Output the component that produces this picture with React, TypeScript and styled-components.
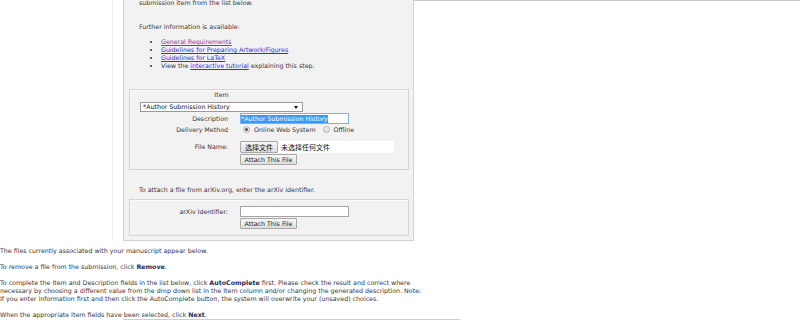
import React from 'react';
import styled, { createGlobalStyle } from 'styled-components';

const GlobalStyle = createGlobalStyle`
  html, body {
    margin: 0;
    padding: 0;
    background: #fff;
  }
  body {
    font-family: 'DejaVu Sans', Verdana, 'Noto Sans CJK SC', sans-serif;
    font-size: 6.3px;
    line-height: 8px;
    color: #333344;
  }
`;

const Page = styled.div`
  width: 800px;
  height: 320px;
  overflow: hidden;
`;

const Top = styled.div`
  display: flex;
  align-items: stretch;
  padding-bottom: 6px;
`;

const Gutter = styled.div`
  width: 112px;
  margin-right: 10px;
  border-right: 1px solid #ededed;
`;

const Panel = styled.div`
  width: 291px;
  box-sizing: border-box;
  background: #f2f2f2;
  border: 1px solid #d2d2d2;
  border-top: none;
  padding: 0 4px 4px 5px;
`;

const Filler = styled.div`
  flex: 1;
  border-top: 1px solid #cacaca;
`;

const Text = styled.p<{ $mt?: number; $mb?: number }>`
  margin: ${p => p.$mt ?? 0}px 0 ${p => p.$mb ?? 0}px 0;
  padding-left: 10px;
`;

const LinkList = styled.ul`
  margin: 0 0 19px 0;
  padding-left: 32px;
  list-style: disc;
`;

const Link = styled.a<{ $visited?: boolean }>`
  color: ${p => (p.$visited ? '#7b3f9e' : '#2f2fe0')};
  text-decoration: underline;
`;

const Fieldset = styled.div<{ $pt: number; $pb: number }>`
  border: 1px solid #d4d4d4;
  box-shadow: inset 1px 1px 0 #fafafa;
  padding: ${p => p.$pt}px 0 ${p => p.$pb}px 0;
`;

const ItemBlock = styled.div`
  margin-left: 10px;
  width: 163px;
`;

const ItemHead = styled.div`
  text-align: center;
  margin-bottom: 3px;
`;

const Select = styled.div`
  height: 10px;
  box-sizing: border-box;
  background: #fff;
  border: 1px solid #9a9a9a;
  display: flex;
  align-items: center;
  justify-content: space-between;
  padding: 0 4px 0 2px;
  color: #111;
`;

const Row = styled.div<{ $mt?: number }>`
  display: grid;
  grid-template-columns: 98px 1fr;
  column-gap: 12px;
  align-items: start;
  margin-top: ${p => p.$mt ?? 0}px;
`;

const Label = styled.div<{ $h: number }>`
  text-align: right;
  line-height: ${p => p.$h}px;
`;

const Controls = styled.div`
  display: flex;
  flex-direction: column;
  align-items: flex-start;
  gap: 1px;
`;

const TextBox = styled.div<{ $focus?: boolean; $w: number }>`
  width: ${p => p.$w}px;
  height: 11px;
  box-sizing: border-box;
  background: #fff;
  border: 1px solid ${p => (p.$focus ? '#7fb0e6' : '#a4a4a4')};
  display: flex;
  align-items: center;
`;

const Selected = styled.span`
  background: #3399ff;
  color: #fff;
  line-height: 8px;
`;

const RadioGroup = styled.div`
  display: flex;
  align-items: center;
  height: 9px;
  padding-left: 3px;
`;

const Radio = styled.span<{ $on?: boolean }>`
  width: 7px;
  height: 7px;
  box-sizing: border-box;
  border-radius: 50%;
  border: 1px solid #b4b4b4;
  background: ${p =>
    p.$on
      ? 'radial-gradient(circle, #555 0 1.2px, #e4e4e4 1.6px)'
      : 'linear-gradient(#f4f4f4, #dcdcdc)'};
  margin-right: 4px;
`;

const RadioText = styled.span`
  margin-right: 7px;
`;

const FileBox = styled.div`
  width: 154px;
  height: 12px;
  background: #fff;
  display: flex;
  align-items: center;
`;

const Button = styled.div<{ $w: number; $h: number }>`
  width: ${p => p.$w}px;
  height: ${p => p.$h}px;
  box-sizing: border-box;
  border: 1px solid #a8a8a8;
  border-radius: 1px;
  background: linear-gradient(#f7f7f7, #dddddd);
  color: #222;
  display: flex;
  align-items: center;
  justify-content: center;
  white-space: nowrap;
`;

const Cjk = styled.span`
  font-family: 'Noto Sans CJK SC', sans-serif;
  font-size: 7px;
  color: #111;
`;

const NoFile = styled(Cjk)`
  margin-left: 3px;
`;

const Bold = styled.b`
  color: #1b2a57;
`;

const Para = styled.p`
  margin: 0 0 8px 0;
`;

const LastPara = styled.p`
  margin: 0;
`;

const TableTop = styled.div`
  margin-left: 123px;
  width: 337px;
  height: 10px;
  box-sizing: border-box;
  border: 1px solid #cfcfcf;
  border-bottom: none;
`;

const Arrow = () => (
  <svg width="4" height="3" viewBox="0 0 4 3">
    <path d="M0 0 H4 L2 3 Z" fill="#111" />
  </svg>
);

export default function App() {
  return (
    <Page>
      <GlobalStyle />
      <Top>
        <Gutter />
        <Panel>
          <Text $mt={-1} $mb={16}>submission item from the list below.</Text>
          <Text $mb={7}>Further information is available:</Text>
          <LinkList>
            <li><Link $visited>General Requirements</Link></li>
            <li><Link>Guidelines for Preparing Artwork/Figures</Link></li>
            <li><Link>Guidelines for LaTeX</Link></li>
            <li>View the <Link>interactive tutorial</Link> explaining this step.</li>
          </LinkList>

          <Fieldset $pt={1} $pb={4}>
            <ItemBlock>
              <ItemHead>Item</ItemHead>
              <Select>
                <span>*Author Submission History</span>
                <Arrow />
              </Select>
            </ItemBlock>
            <Row $mt={1}>
              <Label $h={11}>Description</Label>
              <TextBox $focus $w={109}>
                <Selected>*Author Submission History</Selected>
              </TextBox>
            </Row>
            <Row $mt={1}>
              <Label $h={9}>Delivery Method</Label>
              <RadioGroup>
                <Radio $on />
                <RadioText>Online Web System</RadioText>
                <Radio />
                <RadioText>Offline</RadioText>
              </RadioGroup>
            </Row>
            <Row $mt={7}>
              <Label $h={12}>File Name:</Label>
              <Controls>
                <FileBox>
                  <Button $w={38} $h={12}><Cjk>选择文件</Cjk></Button>
                  <NoFile>未选择任何文件</NoFile>
                </FileBox>
                <Button $w={57} $h={11}>Attach This File</Button>
              </Controls>
            </Row>
          </Fieldset>

          <Text $mt={16} $mb={5}>To attach a file from arXiv.org, enter the arXiv identifier.</Text>

          <Fieldset $pt={6} $pb={6}>
            <Row>
              <Label $h={11}>arXiv Identifier:</Label>
              <Controls>
                <TextBox $w={109} />
                <Button $w={57} $h={11}>Attach This File</Button>
              </Controls>
            </Row>
          </Fieldset>
        </Panel>
        <Filler />
      </Top>

      <Para>The files currently associated with your manuscript appear below.</Para>
      <Para>To remove a file from the submission, click <Bold>Remove</Bold>.</Para>
      <Para>
        To complete the Item and Description fields in the list below, click <Bold>AutoComplete</Bold> first. Please check the result and correct where
        <br />
        necessary by choosing a different value from the drop down list in the Item column and/or changing the generated description. Note:
        <br />
        If you enter information first and then click the AutoComplete button, the system will overwrite your (unsaved) choices.
      </Para>
      <LastPara>When the appropriate Item fields have been selected, click <Bold>Next</Bold>.</LastPara>
      <TableTop />
    </Page>
  );
}
